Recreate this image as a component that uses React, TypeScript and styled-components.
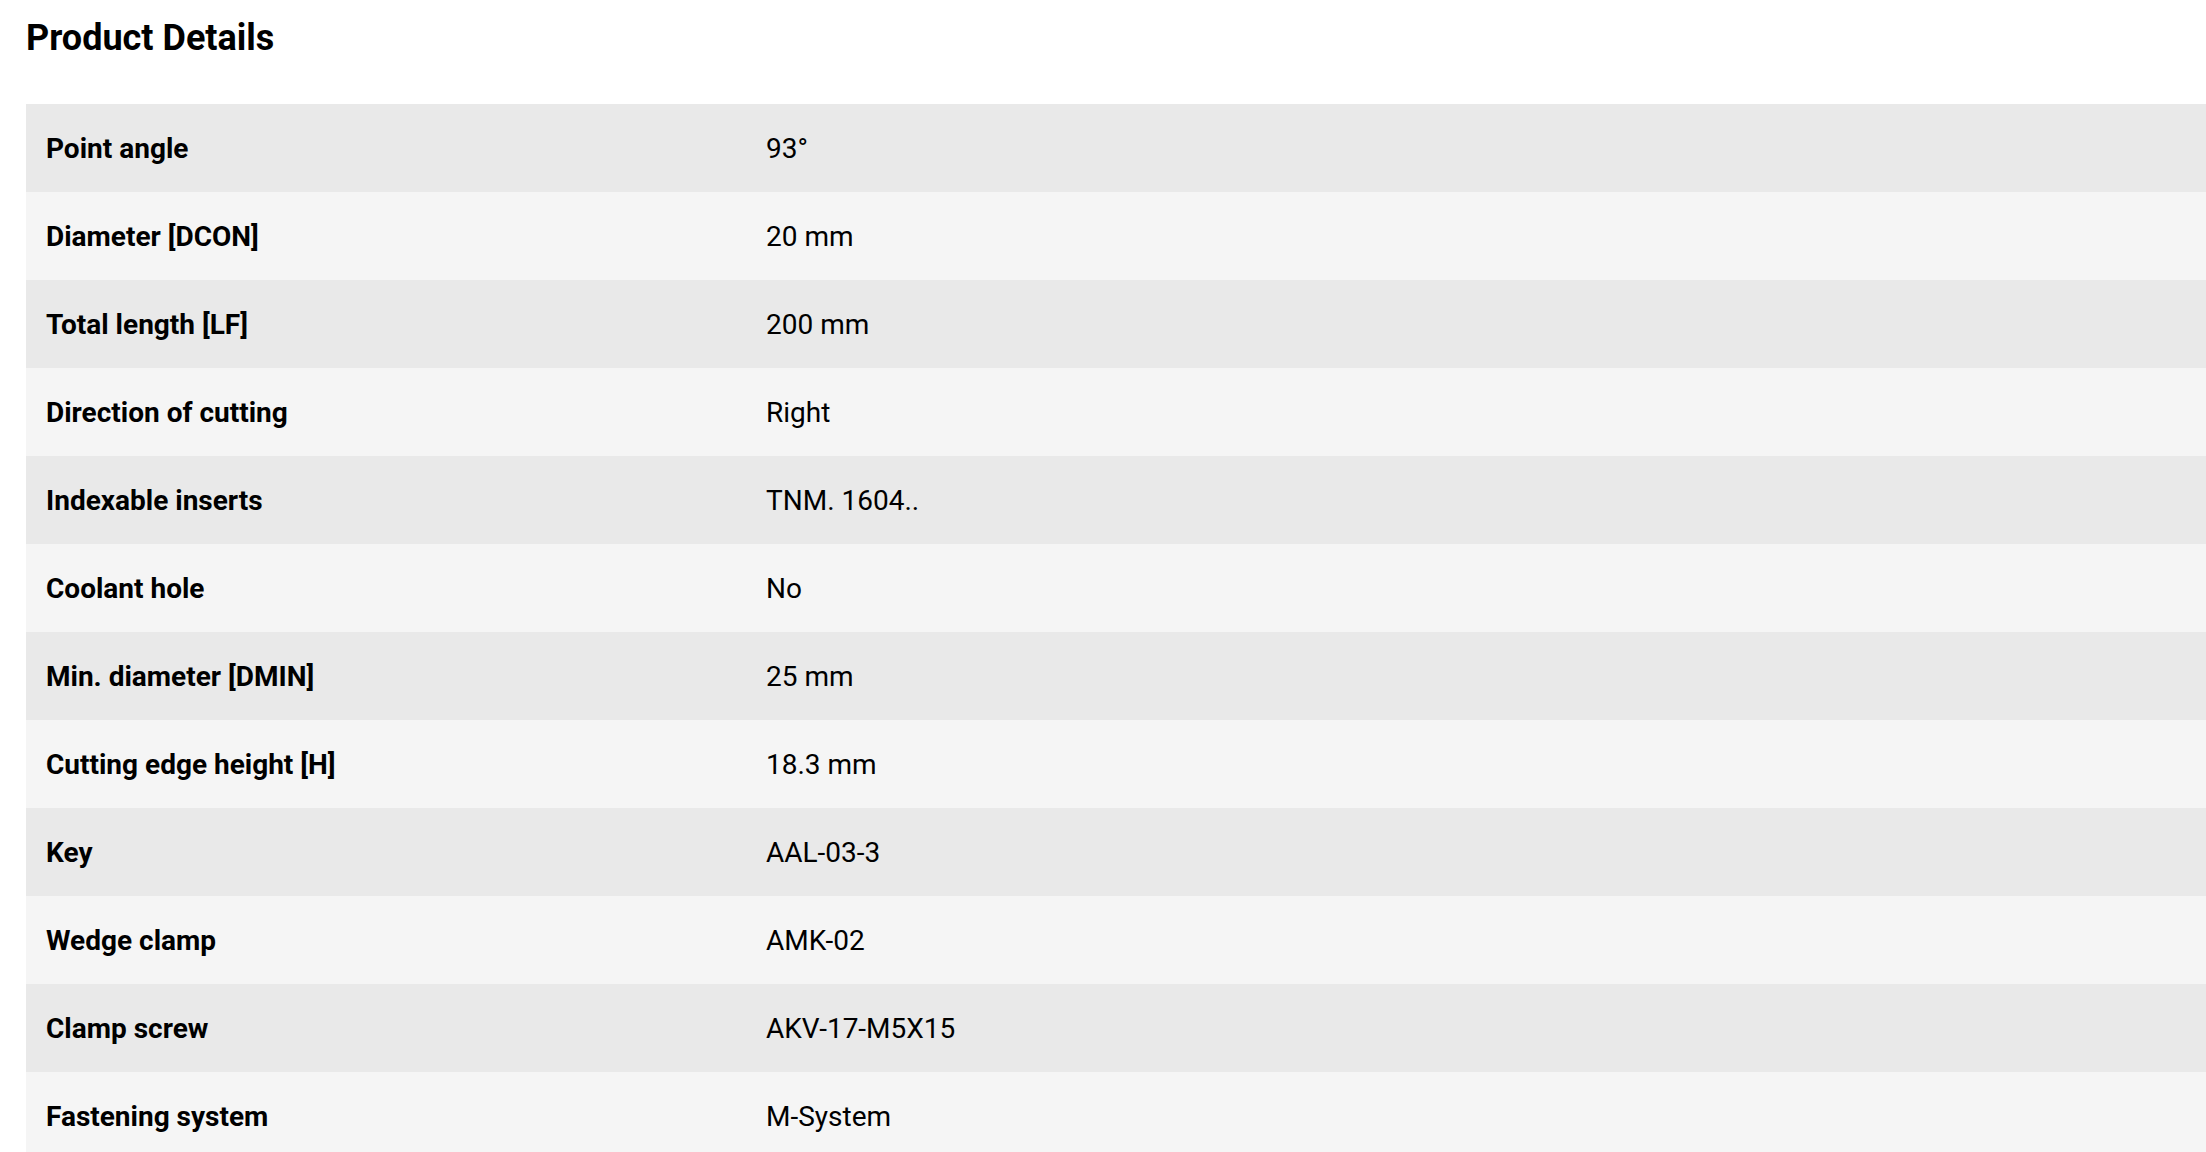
import styled, { createGlobalStyle } from 'styled-components';

const GlobalStyle = createGlobalStyle`
    html, body {
        margin: 0;
        padding: 0;
        background: #fff;
        overflow: hidden;
    }
    body {
        font-family: Roboto, "Liberation Sans", Arial, sans-serif;
        color: #000;
    }
`;

const Page = styled.div`
    padding: 0 0 0 26px;
`;

const Title = styled.h2`
    margin: 0;
    padding-top: 17px;
    height: 104px;
    box-sizing: border-box;
    font-size: 36px;
    font-weight: 700;
    line-height: 42px;
`;

const Table = styled.div`
    display: flex;
    flex-direction: column;
    width: 100%;
`;

const Row = styled.div<{ $shade: boolean }>`
    display: grid;
    grid-template-columns: 720px 1fr;
    height: 88px;
    align-items: center;
    background: ${(p) => (p.$shade ? '#e9e9e9' : '#f5f5f5')};
`;

const Label = styled.div`
    padding-left: 20px;
    font-size: 28px;
    font-weight: 700;
`;

const Value = styled.div`
    padding-left: 20px;
    font-size: 28px;
    font-weight: 400;
`;

const details: [string, string][] = [
    ['Point angle', '93°'],
    ['Diameter [DCON]', '20 mm'],
    ['Total length [LF]', '200 mm'],
    ['Direction of cutting', 'Right'],
    ['Indexable inserts', 'TNM. 1604..'],
    ['Coolant hole', 'No'],
    ['Min. diameter [DMIN]', '25 mm'],
    ['Cutting edge height [H]', '18.3 mm'],
    ['Key', 'AAL-03-3'],
    ['Wedge clamp', 'AMK-02'],
    ['Clamp screw', 'AKV-17-M5X15'],
    ['Fastening system', 'M-System'],
];

export default function App() {
    return (
        <Page>
            <GlobalStyle />
            <Title>Product Details</Title>
            <Table>
                {details.map(([label, value], i) => (
                    <Row key={label} $shade={i % 2 === 0}>
                        <Label>{label}</Label>
                        <Value>{value}</Value>
                    </Row>
                ))}
            </Table>
        </Page>
    );
}
